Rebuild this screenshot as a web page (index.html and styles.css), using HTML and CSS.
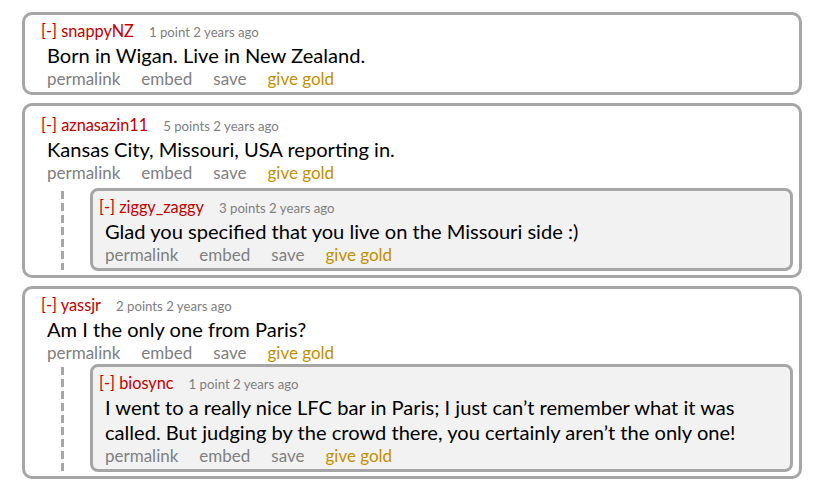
FILE: index.html
```html
<!DOCTYPE html>
<html lang="en">
<head>
<meta charset="utf-8">
<title>Comments</title>
<link rel="stylesheet" href="styles.css">
</head>
<body>
<div class="list">
  <div class="comment">
    <div class="head"><span class="author">[-] snappyNZ</span><span class="meta">1 point 2 years ago</span></div>
    <div class="text">Born in Wigan. Live in New Zealand.</div>
    <div class="actions"><span>permalink</span><span>embed</span><span>save</span><span class="gold">give gold</span></div>
  </div>

  <div class="comment spaced">
    <div class="head"><span class="author">[-] aznasazin11</span><span class="meta">5 points 2 years ago</span></div>
    <div class="text">Kansas City, Missouri, USA reporting in.</div>
    <div class="actions"><span>permalink</span><span>embed</span><span>save</span><span class="gold">give gold</span></div>
    <div class="children">
      <div class="rail"></div>
      <div class="child">
        <div class="head"><span class="author">[-] ziggy_zaggy</span><span class="meta">3 points 2 years ago</span></div>
        <div class="text">Glad you specified that you live on the Missouri side :)</div>
        <div class="actions"><span>permalink</span><span>embed</span><span>save</span><span class="gold">give gold</span></div>
      </div>
    </div>
  </div>

  <div class="comment">
    <div class="head"><span class="author">[-] yassjr</span><span class="meta">2 points 2 years ago</span></div>
    <div class="text">Am I the only one from Paris?</div>
    <div class="actions"><span>permalink</span><span>embed</span><span>save</span><span class="gold">give gold</span></div>
    <div class="children">
      <div class="rail"></div>
      <div class="child">
        <div class="head"><span class="author">[-] biosync</span><span class="meta">1 point 2 years ago</span></div>
        <div class="text">I went to a really nice LFC bar in Paris; I just can’t remember what it was<br>called. But judging by the crowd there, you certainly aren’t the only one!</div>
        <div class="actions"><span>permalink</span><span>embed</span><span>save</span><span class="gold">give gold</span></div>
      </div>
    </div>
  </div>
</div>
</body>
</html>
```

FILE: styles.css
```css
body {
  margin: 0;
  background: #ffffff;
  font-family: Lato, "Open Sans", "DejaVu Sans", sans-serif;
  color: #000000;
}

.list {
  box-sizing: border-box;
  width: 802px;
  padding: 12px 0 0 22px;
  display: flex;
  flex-direction: column;
  gap: 8px;
}

.comment {
  border: 3px solid #a6a6a6;
  border-radius: 10px;
  background: #ffffff;
  padding: 4px 6px 2px 16px;
}

.comment.spaced {
  padding-top: 7px;
}

.head {
  display: flex;
  align-items: baseline;
  gap: 15px;
  line-height: 24px;
  height: 24px;
}

.author {
  color: #c00000;
  font-size: 16.3px;
}

.meta {
  color: #808080;
  font-size: 13.2px;
}

.text {
  padding-left: 6px;
  font-size: 20.1px;
  line-height: 25px;
}

.actions {
  padding-left: 6px;
  display: flex;
  gap: 21px;
  font-size: 17px;
  line-height: 22px;
  color: #808080;
}

.gold {
  color: #bf9000;
}

.children {
  display: flex;
  margin: 0 0 2px 20px;
}

.spaced .children {
  margin-top: 4px;
}

.rail {
  width: 3px;
  margin: 3px 26px 1px 0;
  background: repeating-linear-gradient(to bottom, #a6a6a6 0 8px, transparent 8px 12px);
}

.child {
  flex: 1;
  border: 3px solid #a6a6a6;
  border-radius: 8px;
  background: #f2f2f2;
  padding: 4px 6px 2px 6px;
}
```
